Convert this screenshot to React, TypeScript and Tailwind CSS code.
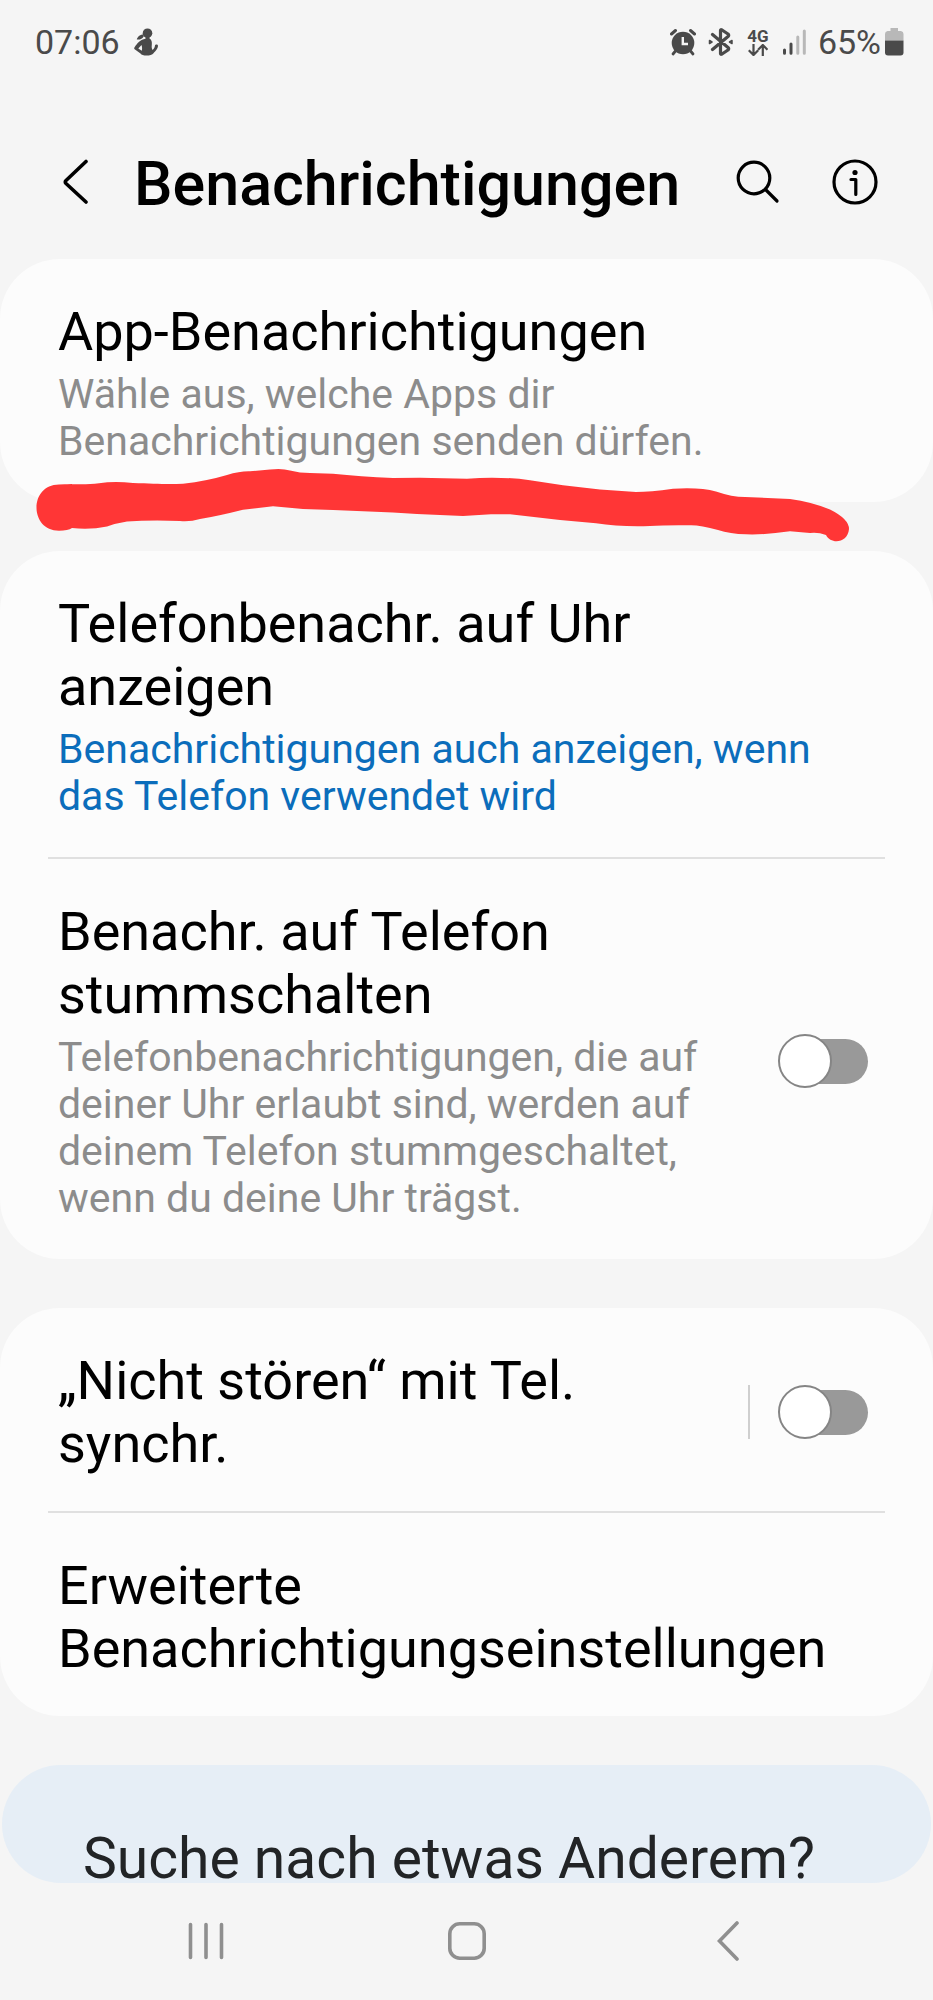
import { useState } from "react";

function StatusBar() {
  return (
    <div className="flex h-[84px] items-center justify-between pl-[35px] pr-[29px] text-[#4a4a4a]">
      <div className="flex items-center gap-[14px]">
        <span className="text-[34px] leading-10">07:06</span>
        <svg width="24" height="28" viewBox="0 0 24 28" fill="currentColor">
          <circle cx="13.5" cy="5.2" r="4.8" />
          <path d="M9.5 6.5C6.5 6.5 3.5 8.500 2.800 11.400C5.500 12 8.500 10.800 9.800 8.200Z" />
          <path d="M11.5 8H15.5V10.5C17.5 11.5 18.2 14 17.8 17C17.5 19 17.8 21 18.6 22C20 20.5 20.8 19.500 21 17.500C21.200 16.300 23.800 16 24 17.800C24 20.500 21 24 19.500 25.200C18.500 27 15.500 27.500 12.500 27.500C9.500 27.500 7.500 27 6.500 25.500L1 21.500C0 20.700 0 20 .6 19.200C3 15.500 6.500 11.500 11.500 10.800ZM7.500 17L4.300 20.500L7.800 22.800C8.300 21 8.200 19 7.500 17Z" fillRule="evenodd" />
        </svg>
      </div>
      <div className="flex items-center">
        <svg width="26" height="28" viewBox="0 0 26 28" fill="none" stroke="currentColor" strokeLinecap="round">
          <circle cx="13" cy="15" r="11.300" fill="currentColor" stroke="none" />
          <path d="M1.500 6L5.500 2.500M24.500 6L20.500 2.500" strokeWidth="3" />
          <path d="M5.500 23L3 26M20.500 23L23 26" strokeWidth="2.800" />
          <path d="M12.800 9V16H18" stroke="#f5f5f5" strokeWidth="2.400" strokeLinecap="butt" />
        </svg>
        <svg className="ml-3" width="26" height="28" viewBox="0 0 26 28" fill="none" stroke="currentColor" strokeWidth="3.200" strokeLinecap="round" strokeLinejoin="round">
          <path d="M4.500 6.500L20 19.500C21 20.500 21 21 20 22L14 26C13 26.500 12.500 26.500 12.500 25.500V2.500C12.500 1.500 13 1.500 14 2L20 6C21 7 21 7.500 20 8.500L4.500 21.500" />
          <path d="M1.500 12.500L4 14L1.500 15.500ZM24 12.500L21.500 14L24 15.500Z" strokeWidth="1.500" fill="currentColor" />
        </svg>
        <span className="ml-3 flex w-6 flex-col items-center">
          <span className="text-[17px] font-bold leading-4">4G</span>
          <svg width="20" height="12" viewBox="0 0 20 12" fill="none" stroke="currentColor" strokeWidth="2.200">
            <path d="M5.500 0V11M.8 6.200L5.500 11L10.200 6.200M14.800 12V1M10.100 5.800L14.800 1L19.500 5.800" />
          </svg>
        </span>
        <svg className="ml-3" width="24" height="26" viewBox="0 0 24 26" stroke="currentColor" strokeWidth="3" strokeLinecap="round">
          <path d="M2.500 21V24.300M9 15V24.300" />
          <path d="M15.800 8V24.300M22.300 2V24.300" stroke="#b8b8b8" />
        </svg>
        <span className="ml-3 text-[34px] leading-10">65%</span>
        <svg className="ml-1" width="19" height="28" viewBox="0 0 19 28">
          <path d="M5.500 0H13V3H16Q18.500 3.500 18.500 6V12.500H0V6Q0 3.500 2.500 3H5.500Z" fill="#b8b8b8" />
          <path d="M0 12.500H18.500V24.500Q18.500 27.500 15.500 27.500H3Q0 27.500 0 24.500Z" fill="currentColor" />
        </svg>
      </div>
    </div>
  );
}

function Header() {
  return (
    <header className="flex h-[175px] items-center pl-[52px] pr-[54px] pt-5 text-black">
      <button type="button" aria-label="Zurück" className="flex h-12 w-12 items-center justify-center">
        <svg width="26" height="46" viewBox="0 0 26 46" fill="none" stroke="currentColor" strokeWidth="3.600" strokeLinecap="round" strokeLinejoin="round">
          <path d="M23 2.500L3 21.500Q1.500 23 3 24.500L23 43" />
        </svg>
      </button>
      <h1 className="flex-1 pl-[34px] pt-1 text-[61px] font-medium leading-[72px]">Benachrichtigungen</h1>
      <button type="button" aria-label="Suchen" className="flex h-12 w-12 items-center justify-center">
        <svg width="44" height="44" viewBox="0 0 44 44" fill="none" stroke="currentColor" strokeWidth="3.200" strokeLinecap="round">
          <circle cx="18" cy="18" r="15.800" />
          <path d="M29.500 29.500L41 41" />
        </svg>
      </button>
      <button type="button" aria-label="Info" className="ml-[49px] flex h-12 w-12 items-center justify-center">
        <svg width="46" height="46" viewBox="0 0 46 46" fill="none" stroke="currentColor" strokeWidth="3.200" strokeLinecap="round" strokeLinejoin="round">
          <circle cx="23" cy="23" r="21" />
          <circle cx="23" cy="13.500" r="2.600" fill="currentColor" stroke="none" />
          <path d="M19 20.500H23.800V35.500" />
        </svg>
      </button>
    </header>
  );
}

function Toggle({ id }: { id: string }) {
  const [on, setOn] = useState(false);
  return (
    <input
      id={id}
      type="checkbox"
      checked={on}
      onChange={() => setOn(!on)}
      className="flex h-[45px] w-[88px] shrink-0 appearance-none items-center rounded-full bg-[#999999] before:-ml-0.5 before:h-[54px] before:w-[54px] before:shrink-0 before:rounded-full before:border-2 before:border-[#858585] before:bg-white checked:bg-[#0072de] checked:before:ml-9"
    />
  );
}

const titleClass = "block text-[54px] leading-[63px] text-black";
const textClass = "mt-2 block text-[41px] leading-[47px]";

function Divider() {
  return <hr className="mx-12 border-t-2 border-[#e0e0e0]" />;
}

// hand-drawn marker line across the bottom of the first card
function MarkerLine() {
  return (
    <svg className="pointer-events-none absolute left-0 top-[206px] w-full" viewBox="0 0 933 80" fill="#ff3636">
      <path d="M59 19.500C75 19 88 19.800 99 18.300Q114 16 133 18C155 18.700 168 19.500 183 18.700Q207 16 227 10Q240 6 250 6.300L270 4.500Q282 3 290 5.500Q300 8 310 8L333 8.700Q360 11.500 393 13L420 12.700L467 13.700Q500 11 530 15.300L563 20.300L600 24.500L636 27Q650 27 673 23.700Q700 22 716 26.500Q732 32 745 32L790 34Q812 37 830 44.500Q849 54 849 64C848 78 831 80 826 70Q818 67 810 68L790 66.300Q765 70 746 69.300Q730 69 718 65Q700 60 690 60.300Q665 60 650 61Q620 62 596 58.300L560 55L510 49.300L491 49.300L463 51L417 49L393 47.500L333 45L303 44L273 41.300L243 44.700Q218 51 200 54Q190 57 180 56Q150 55 127 56.500Q117 58 107 61.500Q90 65 72 63Q68 65.700 59 65.700C29 65.700 29 19.500 59 19.500Z" />
    </svg>
  );
}

export default function App() {
  return (
    <div className="flex min-h-screen flex-col bg-[#f5f5f5] font-[Roboto,sans-serif]">
      <StatusBar />
      <Header />
      <main className="flex flex-col gap-[49px]">
        <section className="relative rounded-[60px] bg-[#fcfcfc]">
          <a href="#apps" className="block pb-[37px] pl-[58px] pr-16 pt-[41px]">
            <span className={titleClass}>App-Benachrichtigungen</span>
            <span className={`${textClass} text-[#8c8c8c]`}>
              Wähle aus, welche Apps dir Benachrichtigungen senden dürfen.
            </span>
          </a>
          <MarkerLine />
        </section>

        <section className="rounded-[60px] bg-[#fcfcfc]">
          <a href="#uhr" className="block pb-[37px] pl-[58px] pr-[120px] pt-[41px]">
            <span className={titleClass}>Telefonbenachr. auf Uhr anzeigen</span>
            <span className={`${textClass} text-[#0b6dbb]`}>
              Benachrichtigungen auch anzeigen, wenn das Telefon verwendet wird
            </span>
          </a>
          <Divider />
          <div className="flex items-center pb-[37px] pl-[58px] pr-[65px] pt-[41px]">
            <label htmlFor="mute" className="flex-1 pr-16">
              <span className={titleClass}>Benachr. auf Telefon stummschalten</span>
              <span className={`${textClass} text-[#8c8c8c]`}>
                Telefonbenachrichtigungen, die auf deiner Uhr erlaubt sind, werden auf deinem Telefon
                stummgeschaltet, wenn du deine Uhr trägst.
              </span>
            </label>
            <Toggle id="mute" />
          </div>
        </section>

        <section className="rounded-[60px] bg-[#fcfcfc]">
          <div className="flex items-center pb-9 pl-[58px] pr-[65px] pt-[41px]">
            <label htmlFor="dnd" className={`${titleClass} flex-1 pr-16`}>
              „Nicht stören“ mit Tel. synchr.
            </label>
            <div className="flex items-center gap-[30px]">
              <div className="h-[54px] w-0.5 bg-[#cfcfcf]" />
              <Toggle id="dnd" />
            </div>
          </div>
          <Divider />
          <a href="#erweitert" className="block pb-9 pl-[58px] pr-16 pt-[41px]">
            <span className={titleClass}>Erweiterte Benachrichtigungseinstellungen</span>
          </a>
        </section>

        <section className="mx-0.5 rounded-[59px] bg-[#e6eef6] pl-[81px] pt-[70px]">
          <h2 className="text-[57px] leading-[48px] text-[#222426]">Suche nach etwas Anderem?</h2>
        </section>
      </main>

      <nav className="grid h-[116px] grid-cols-3 place-items-center px-[75px] text-[#8f8f8f]">
        <button type="button" aria-label="Letzte Apps">
          <svg width="36" height="38" viewBox="0 0 36 38" stroke="currentColor" strokeWidth="3.600" strokeLinecap="round">
            <path d="M2.500 2.500V35.500M18 2.500V35.500M33.500 2.500V35.500" />
          </svg>
        </button>
        <button type="button" aria-label="Startseite">
          <svg width="38" height="38" viewBox="0 0 38 38" fill="none" stroke="currentColor" strokeWidth="3.600">
            <rect x="1.800" y="1.800" width="34.400" height="34.400" rx="10" />
          </svg>
        </button>
        <button type="button" aria-label="Zurück">
          <svg width="22" height="40" viewBox="0 0 22 40" fill="none" stroke="currentColor" strokeWidth="3.600" strokeLinecap="round">
            <path d="M20 2L2.500 20L20 38" />
          </svg>
        </button>
      </nav>
    </div>
  );
}
